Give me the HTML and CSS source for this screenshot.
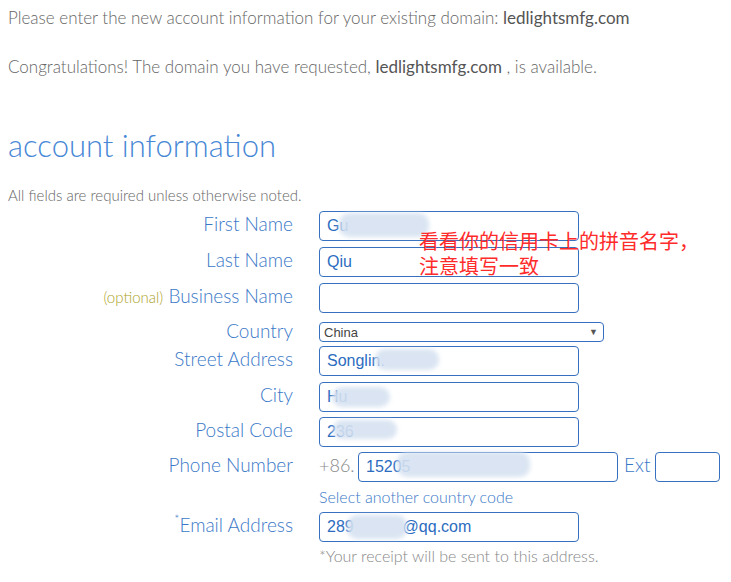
FILE: index.html
```html
<!DOCTYPE html>
<html lang="en">
<head>
    <meta charset="UTF-8">
    <meta name="viewport" content="width=device-width, initial-scale=1.0">
    <title>Account Information</title>
    <link rel="stylesheet" href="styles.css">
</head>
<body>

    <p class="intro">Please enter the new account information for your existing domain: <strong>ledlightsmfg.com</strong></p>
    <p class="intro second">Congratulations! The domain you have requested, <strong>ledlightsmfg.com</strong> , is available.</p>

    <h1>account information</h1>
    <p class="required-note">All fields are required unless otherwise noted.</p>

    <div class="account-form">
        <div class="row">
            <label class="label">First Name</label>
            <div class="field">
                <input type="text" value="Gu">
                <span class="blur" style="left:20px;top:2px;width:90px;height:24px"></span>
            </div>
        </div>
        <div class="row">
            <label class="label">Last Name</label>
            <div class="field"><input type="text" value="Qiu"></div>
        </div>
        <div class="row gap-big">
            <label class="label"><span class="optional">(optional)</span> Business Name</label>
            <div class="field"><input type="text" value=""></div>
        </div>
        <div class="row row-country gap-small">
            <label class="label">Country</label>
            <div class="field">
                <select class="country">
                    <option>China</option>
                </select>
                <span class="arrow">&#9660;</span>
            </div>
        </div>
        <div class="row">
            <label class="label">Street Address</label>
            <div class="field">
                <input type="text" value="Songlin.">
                <span class="blur" style="left:56px;top:3px;width:64px;height:21px"></span>
            </div>
        </div>
        <div class="row gap-5">
            <label class="label">City</label>
            <div class="field">
                <input type="text" value="Hu">
                <span class="blur" style="left:13px;top:5px;width:58px;height:20px"></span>
            </div>
        </div>
        <div class="row gap-5">
            <label class="label">Postal Code</label>
            <div class="field">
                <input type="text" value="236">
                <span class="blur" style="left:14px;top:3px;width:64px;height:19px"></span>
            </div>
        </div>
        <div class="row">
            <label class="label">Phone Number</label>
            <div class="field phone">
                <span class="prefix">+86.</span>
                <div class="phone-box">
                    <input type="text" value="15205">
                    <span class="blur" style="left:39px;top:0;width:133px;height:25px"></span>
                </div>
                <span class="ext">Ext</span>
                <input type="text" class="ext-input" value="">
            </div>
        </div>
        <div class="row">
            <span class="label"></span>
            <a class="country-code" href="#">Select another country code</a>
        </div>
        <div class="row gap-small">
            <label class="label"><span class="star">*</span>Email Address</label>
            <div class="field">
                <input type="text" value="289           @qq.com">
                <span class="blur" style="left:28px;top:3px;width:60px;height:24px"></span>
            </div>
        </div>
        <div class="row">
            <span class="label"></span>
            <span class="receipt">*Your receipt will be sent to this address.</span>
        </div>

        <!-- red note pasted on top of the screenshot -->
        <div class="annotation">看看你的信用卡上的拼音名字，<br>注意填写一致</div>
    </div>

</body>
</html>
```

FILE: styles.css
```css
body {
    font-family: "Lato Light", Lato, sans-serif;
    font-weight: 300;
    color: #666;
    margin: 0;
    padding: 8px;
    background: #fff;
}
.intro {
    margin: 0;
    font-size: 17px;
    line-height: 20px;
}
.intro strong {
    font-family: Lato, sans-serif;
    font-weight: 400;
    color: #555;
}
.intro.second {
    margin-top: 29px;
}
h1 {
    margin: 48px 0 0;
    font-size: 31px;
    line-height: 40px;
    font-weight: 300;
    color: #4787d6;
}
.required-note {
    margin: 20px 0 6px;
    font-size: 15px;
    line-height: 20px;
}
.account-form {
    position: relative;
}
.row {
    display: flex;
    align-items: flex-start;
    margin-bottom: 6px;
}
.row.gap-big {
    margin-bottom: 9px;
}
.row.gap-small {
    margin-bottom: 4px;
}
.row.gap-5 {
    margin-bottom: 5px;
}
.label {
    width: 285px;
    flex: none;
    margin-right: 26px;
    text-align: right;
    font-size: 19px;
    line-height: 26px;
    color: #3a78c8;
}
.row-country .label {
    line-height: 18px;
}
.optional {
    color: #aea227;
    font-size: 15px;
}
.star {
    font-size: 12px;
    vertical-align: top;
    line-height: 14px;
}
.field {
    position: relative;
}
input {
    display: block;
    box-sizing: border-box;
    width: 260px;
    height: 30px;
    padding: 0 7px;
    border: 1px solid #3670bf;
    border-radius: 4px;
    font-family: "Liberation Sans", Arial, sans-serif;
    font-size: 16px;
    color: #2c6cbf;
    background: #fff;
}
.country {
    display: block;
    box-sizing: border-box;
    width: 285px;
    height: 20px;
    padding: 0 4px;
    border: 1px solid #3670bf;
    border-radius: 4px;
    font-family: "Liberation Sans", Arial, sans-serif;
    font-size: 13px;
    color: #444;
    background: #fff;
    appearance: none;
    -webkit-appearance: none;
}
.arrow {
    position: absolute;
    right: 6px;
    top: 4px;
    font-size: 9px;
    color: #555;
    pointer-events: none;
}
.phone {
    display: flex;
    align-items: flex-start;
}
.prefix {
    width: 39px;
    font-size: 18px;
    line-height: 26px;
    color: #888;
}
.phone-box {
    position: relative;
}
.ext {
    margin: 0 5px 0 6px;
    font-size: 19px;
    line-height: 26px;
    color: #3a78c8;
}
.ext-input {
    width: 65px;
}
.country-code {
    font-size: 16px;
    line-height: 18px;
    color: #3a78c8;
    text-decoration: none;
}
.receipt {
    font-size: 16px;
    line-height: 20px;
    color: #888;
}
.blur {
    position: absolute;
    background: #d6e2f1;
    border-radius: 10px;
    filter: blur(2px);
    opacity: 0.9;
}
.annotation {
    position: absolute;
    left: 411px;
    top: 17px;
    font-family: "Noto Sans CJK SC", sans-serif;
    font-weight: 400;
    font-size: 20px;
    line-height: 25px;
    color: #ff2b2b;
    white-space: nowrap;
}
```
